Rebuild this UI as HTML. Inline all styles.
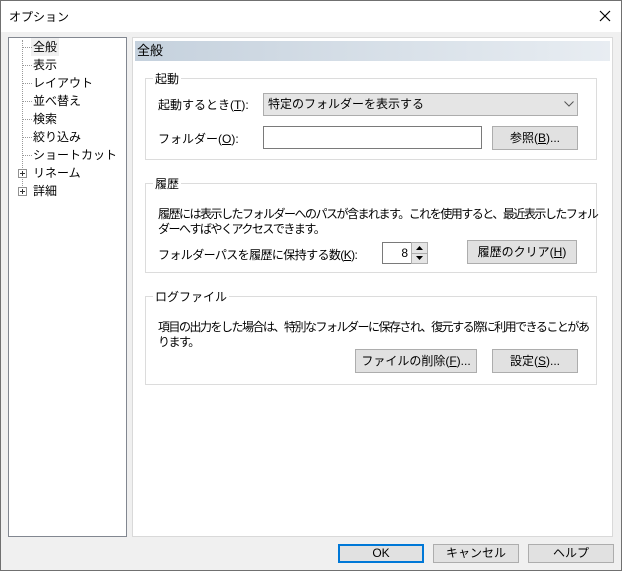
<!DOCTYPE html>
<html><head><meta charset="utf-8"><style>
*{box-sizing:border-box;margin:0;padding:0}
body{width:622px;height:571px;background:#f0f0f0;font-family:"Liberation Sans","Noto Sans CJK JP",sans-serif;font-size:12px;color:#000;position:relative;overflow:hidden;border:1px solid #707070}
.a{position:absolute;white-space:nowrap}
.title{left:0;top:0;width:620px;height:31px;background:#fff}
.btn{position:absolute;background:#e1e1e1;border:1px solid #adadad;text-align:center;line-height:22px;height:24px}
.grp{position:absolute;border:1px solid #dcdcdc}
.gt{position:absolute;top:-9px;left:7px;background:#fff;padding:0 2px}
u{text-decoration:underline}
.tree div{position:absolute;left:25px;height:18px;line-height:18px}
.dot{position:absolute;border-top:1px dotted #999;width:9px}
.n{letter-spacing:-1.5px}
</style></head><body>
<div class="a title"></div>
<div class="a" style="left:8px;top:7px;font-size:12px">オプション</div>
<svg class="a" style="left:598px;top:9px" width="12" height="12"><path d="M1 1L11 11M11 1L1 11" stroke="#000" stroke-width="1.2"/></svg>

<div class="a" style="left:7px;top:36px;width:119px;height:500px;background:#fff;border:1px solid #828790"></div>
<div class="a tree" style="left:7px;top:36px;width:119px;height:500px">
<div style="left:14px;top:3px;width:1px;height:150px;border-left:1px dotted #999"></div>
<div style="top:1px;background:#f0f0f0;padding:0 2px;left:23px">全般</div>
<div style="top:19px">表示</div>
<div style="top:37px">レイアウト</div>
<div style="top:55px">並べ替え</div>
<div style="top:73px">検索</div>
<div style="top:91px">絞り込み</div>
<div style="top:109px">ショートカット</div>
<div style="top:127px">リネーム</div>
<div style="top:145px">詳細</div>
</div>
<div class="dot a" style="left:22px;top:46px"></div>
<div class="dot a" style="left:22px;top:64px"></div>
<div class="dot a" style="left:22px;top:82px"></div>
<div class="dot a" style="left:22px;top:100px"></div>
<div class="dot a" style="left:22px;top:118px"></div>
<div class="dot a" style="left:22px;top:136px"></div>
<div class="dot a" style="left:22px;top:154px"></div>
<svg class="a" style="left:17px;top:168px" width="9" height="9"><rect x=".5" y=".5" width="8" height="8" fill="#fff" stroke="#919191"/><path d="M2 4.5H7M4.5 2V7" stroke="#333"/></svg>
<svg class="a" style="left:17px;top:186px" width="9" height="9"><rect x=".5" y=".5" width="8" height="8" fill="#fff" stroke="#919191"/><path d="M2 4.5H7M4.5 2V7" stroke="#333"/></svg>

<div class="a" style="left:131px;top:36px;width:481px;height:500px;background:#fff;border:1px solid #d9d9d9"></div>
<div class="a" style="left:134px;top:40px;width:475px;height:20px;background:linear-gradient(to right,#c5d1dd,#e8edf2);line-height:20px;padding-left:2px;font-size:13px">全般</div>

<div class="grp" style="left:144px;top:77px;width:452px;height:82px;background:#fff"><span class="gt">起動</span></div>
<div class="a" style="left:157px;top:95px">起動するとき(<u>T</u>):</div>
<div class="a" style="left:262px;top:92px;width:315px;height:23px;background:#e5e5e5;border:1px solid #adadad;line-height:21px;padding-left:4px">特定のフォルダーを表示する</div>
<svg class="a" style="left:563px;top:100px" width="10" height="6"><path d="M.5 .5L5 5 9.5 .5" stroke="#555" fill="none"/></svg>
<div class="a" style="left:157px;top:129px">フォルダー(<u>O</u>):</div>
<div class="a" style="left:262px;top:125px;width:219px;height:23px;background:#fff;border:1px solid #7a7a7a"></div>
<div class="btn" style="left:491px;top:125px;width:86px">参照(<u>B</u>)...</div>

<div class="grp" style="left:144px;top:182px;width:452px;height:90px"><span class="gt">履歴</span></div>
<div class="a n" style="left:157px;top:204px">履歴には表示したフォルダーへのパスが含まれます。これを使用すると、最近表示したフォル</div>
<div class="a n" style="left:157px;top:219px">ダーへすばやくアクセスできます。</div>
<div class="a" style="left:157px;top:245px;letter-spacing:-0.6px">フォルダーパスを履歴に保持する数(<u>K</u>):</div>
<div class="a" style="left:381px;top:241px;width:30px;height:22px;border:1px solid #7a7a7a;background:#fff;text-align:right;padding-right:3px;line-height:20px">8</div>
<div class="a" style="left:410px;top:241px;width:17px;height:22px;border:1px solid #adadad;background:#e5e5e5"></div>
<div class="a" style="left:411px;top:252px;width:15px;border-top:1px solid #adadad"></div>
<svg class="a" style="left:415px;top:245px" width="7" height="4"><path d="M0 4L3.5 0 7 4z" fill="#000"/></svg>
<svg class="a" style="left:415px;top:255px" width="7" height="4"><path d="M0 0L3.5 4 7 0z" fill="#000"/></svg>
<div class="btn" style="left:466px;top:239px;width:110px">履歴のクリア(<u>H</u>)</div>

<div class="grp" style="left:144px;top:295px;width:452px;height:89px"><span class="gt">ログファイル</span></div>
<div class="a n" style="left:157px;top:317px">項目の出力をした場合は、特別なフォルダーに保存され、復元する際に利用できることがあ</div>
<div class="a n" style="left:157px;top:332px">ります。</div>
<div class="btn" style="left:354px;top:348px;width:122px">ファイルの削除(<u>F</u>)...</div>
<div class="btn" style="left:491px;top:348px;width:86px">設定(<u>S</u>)...</div>

<div class="btn" style="left:337px;top:543px;width:86px;height:19px;line-height:15px;border:2px solid #0078d7">OK</div>
<div class="btn" style="left:432px;top:543px;width:86px;height:19px;line-height:17px">キャンセル</div>
<div class="btn" style="left:527px;top:543px;width:86px;height:19px;line-height:17px">ヘルプ</div>
</body></html>
